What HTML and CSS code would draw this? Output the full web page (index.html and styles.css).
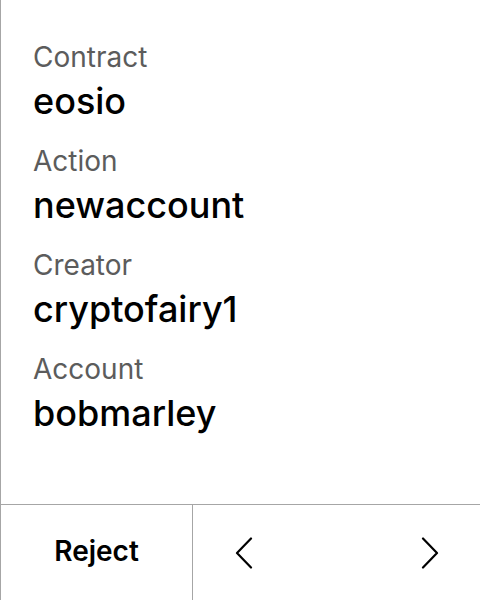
FILE: index.html
```html
<!DOCTYPE html>
<html>
<head>
<meta charset="utf-8">
<link rel="stylesheet" href="styles.css">
</head>
<body>
<div class="screen">
  <div class="fields">
    <div class="field"><div class="label">Contract</div><div class="value">eosio</div></div>
    <div class="field"><div class="label">Action</div><div class="value">newaccount</div></div>
    <div class="field"><div class="label">Creator</div><div class="value">cryptofairy1</div></div>
    <div class="field"><div class="label">Account</div><div class="value">bobmarley</div></div>
  </div>
  <div class="bar">
    <div class="reject">Reject</div>
    <div class="nav">
      <svg class="chev" viewBox="0 0 18 32" width="18" height="32"><path d="M16 1.5 L2 16 L16 30.5" fill="none" stroke="#000" stroke-width="2.2" stroke-linecap="round" stroke-linejoin="round"/></svg>
      <svg class="chev" viewBox="0 0 18 32" width="18" height="32"><path d="M2 1.5 L16 16 L2 30.5" fill="none" stroke="#000" stroke-width="2.2" stroke-linecap="round" stroke-linejoin="round"/></svg>
    </div>
  </div>
</div>
</body>
</html>
```
FILE: styles.css
```css
html, body { margin: 0; padding: 0; background: #fff; }
body { font-family: Inter, "Noto Sans", sans-serif; color: #000; }
.screen {
  width: 480px; height: 600px; box-sizing: border-box;
  border-left: 1px solid #a6a6a6;
  display: flex; flex-direction: column;
}
.fields { flex: 1; padding: 39px 0 0 32px; display: flex; flex-direction: column; gap: 18px; }
.field { display: flex; flex-direction: column; }
.label { font-size: 28px; line-height: 36px; color: #5c5c5c; }
.value { font-size: 36px; line-height: 48px; font-weight: 500; margin-top: 2px; }
.bar { height: 95px; border-top: 1px solid #a6a6a6; display: flex; }
.reject { width: 192px; border-right: 1px solid #a6a6a6; display: flex; align-items: center; justify-content: center; font-size: 28px; font-weight: 600; padding-bottom: 3px; box-sizing: border-box; }
.nav { flex: 1; display: flex; align-items: center; justify-content: space-between; padding: 0 41px 0 42px; }
.chev { display: block; }
```
